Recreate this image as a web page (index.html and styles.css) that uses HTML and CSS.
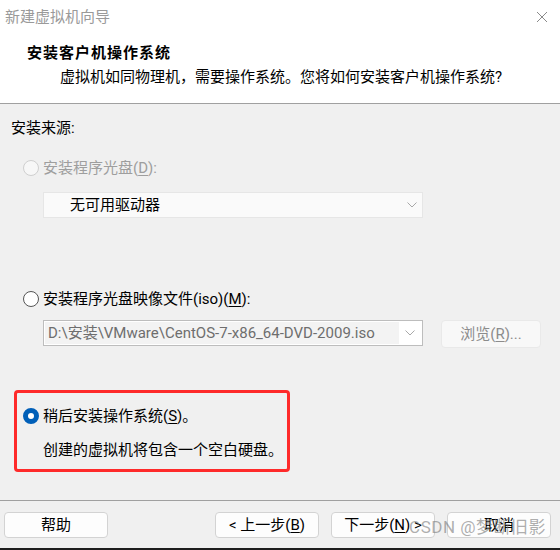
FILE: index.html
```html
<!DOCTYPE html>
<html lang="zh-CN">
<head>
<meta charset="utf-8">
<title>新建虚拟机向导</title>
<link rel="stylesheet" href="styles.css">
</head>
<body>
<div class="window">
  <div class="header">
    <div class="titlebar">
      <span class="title">新建虚拟机向导</span>
      <svg class="close" width="12" height="12" viewBox="0 0 12 12"><path d="M1 1 L11 11 M11 1 L1 11" stroke="#8a8a8a" stroke-width="1" fill="none"/></svg>
    </div>
    <div class="heading">安装客户机操作系统</div>
    <div class="subtitle">虚拟机如同物理机，需要操作系统。您将如何安装客户机操作系统?</div>
  </div>

  <div class="content">
    <div class="label">安装来源:</div>

    <div class="radio-row disabled row-d">
      <span class="radio"></span>
      <span>安装程序光盘(<u>D</u>):</span>
    </div>
    <div class="dropdown">
      <span class="dd-text">无可用驱动器</span>
      <svg class="chev" width="10" height="6" viewBox="0 0 10 6"><path d="M0.5 0.5 L5 5 L9.5 0.5" stroke="#a8a8a8" stroke-width="1" fill="none"/></svg>
    </div>

    <div class="radio-row row-m">
      <span class="radio"></span>
      <span>安装程序光盘映像文件(iso)(<u>M</u>):</span>
    </div>
    <div class="iso-row">
      <div class="combo">
        <span class="combo-text">D:\安装\VMware\CentOS-7-x86_64-DVD-2009.iso</span>
        <span class="combo-btn">
          <svg width="10" height="6" viewBox="0 0 10 6"><path d="M0.5 0.5 L5 5 L9.5 0.5" stroke="#a8a8a8" stroke-width="1" fill="none"/></svg>
        </span>
      </div>
      <div class="browse">浏览(<u>R</u>)...</div>
    </div>

    <div class="highlight">
      <div class="radio-row">
        <span class="radio checked"></span>
        <span>稍后安装操作系统(<u>S</u>)。</span>
      </div>
      <div class="note">创建的虚拟机将包含一个空白硬盘。</div>
    </div>
  </div>

  <div class="footer">
    <div class="btn">帮助</div>
    <div class="spacer"></div>
    <div class="btn">&lt; 上一步(<u>B</u>)</div>
    <div class="btn">下一步(<u>N</u>) &gt;</div>
    <div class="btn">取消</div>
    <div class="watermark">CSDN @梦断旧影</div>
  </div>
</div>
</body>
</html>
```

FILE: styles.css
```css
* { box-sizing: border-box; }
html, body {
  margin: 0;
  padding: 0;
  width: 560px;
  height: 550px;
  overflow: hidden;
}
body {
  font-family: "Roboto", "Noto Sans CJK SC", sans-serif;
  font-size: 15px;
  line-height: 20px;
  color: #000;
  background: #f0f0f0;
}
u { text-decoration: underline; text-underline-offset: 2px; text-decoration-thickness: 1px; }

.window {
  width: 560px;
  height: 550px;
  display: flex;
  flex-direction: column;
  border-bottom: 2px solid #1e1e1e;
  position: relative;
}

.header {
  background: #ffffff;
  border-bottom: 1px solid #a0a0a0;
  height: 104px;
  flex: none;
}
.titlebar {
  height: 34px;
  display: flex;
  align-items: center;
  justify-content: space-between;
  padding: 0 12px 0 5px;
}
.title { color: #9a9a9a; }
.close { display: block; }
.heading {
  margin-top: 9px;
  padding-left: 27px;
  font-weight: bold;
  font-size: 15px;
  letter-spacing: 1px;
}
.subtitle {
  margin-top: 4px;
  padding-left: 60px;
}

.content {
  flex: 1;
  padding: 14px 0 0 0;
  display: flex;
  flex-direction: column;
}
.label { padding-left: 11px; }

.radio-row {
  display: flex;
  align-items: center;
  gap: 4px;
  padding-left: 23px;
  height: 20px;
}
.row-d { margin-top: 20px; }
.row-m { margin-top: 71px; }
.radio-row.disabled { color: #9e9e9e; }
.radio {
  width: 16px;
  height: 16px;
  border-radius: 50%;
  border: 1px solid #555;
  background: #fff;
  flex: none;
}
.disabled .radio { border-color: #cfcfcf; background: #f7f7f7; }
.radio.checked {
  border: 5px solid #005fb8;
  background: #fff;
}

.dropdown {
  margin: 14px 0 0 43px;
  width: 380px;
  height: 26px;
  background: #fafafa;
  border: 1px solid #e6e6e6;
  display: flex;
  align-items: center;
  justify-content: space-between;
  padding: 0 5px 0 26px;
}
.chev { display: block; }

.iso-row {
  margin: 11px 0 0 43px;
  display: flex;
  align-items: flex-start;
  gap: 18px;
}
.combo {
  width: 380px;
  height: 26px;
  background: #fff;
  border: 1px solid #bdbdbd;
  display: flex;
  align-items: stretch;
  padding: 1px;
}
.combo-text {
  flex: 1;
  background: #f3f3f3;
  color: #6e6e6e;
  padding-left: 3px;
  display: flex;
  align-items: center;
  white-space: nowrap;
  overflow: hidden;
}
.combo-btn {
  width: 22px;
  display: flex;
  align-items: center;
  justify-content: center;
}
.combo-btn svg { display: block; }
.browse {
  width: 100px;
  height: 28px;
  background: #f8f8f8;
  border: 1px solid #e9e9e9;
  border-radius: 4px;
  color: #8c8c8c;
  display: flex;
  align-items: center;
  justify-content: center;
}

.highlight {
  margin: 42px 0 0 14px;
  width: 276px;
  height: 82px;
  border: 3px solid #fe2a2a;
  border-radius: 4px;
  padding-top: 13px;
}
.highlight .radio-row { padding-left: 6px; }
.note {
  margin-top: 14px;
  padding-left: 26px;
}

.footer {
  flex: none;
  height: 48px;
  border-top: 1px solid #a0a0a0;
  display: flex;
  align-items: flex-start;
  gap: 12px;
  padding: 11px 9px 0 4px;
  position: relative;
}
.spacer { flex: 1; }
.btn {
  width: 104px;
  height: 26px;
  background: #fdfdfd;
  border: 1px solid #d3d3d3;
  border-radius: 4px;
  display: flex;
  align-items: center;
  justify-content: center;
}
.watermark {
  position: absolute;
  right: 14px;
  top: 16px;
  font-size: 17px;
  color: rgba(120, 120, 120, 0.6);
  letter-spacing: 0.5px;
  pointer-events: none;
}
```
